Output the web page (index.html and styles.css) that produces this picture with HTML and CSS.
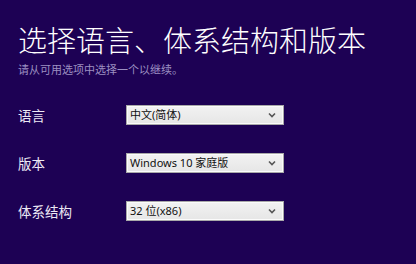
FILE: index.html
```html
<!DOCTYPE html>
<html lang="zh-CN">
<head>
<meta charset="utf-8">
<title>选择语言、体系结构和版本</title>
<link rel="stylesheet" href="styles.css">
</head>
<body>
<div class="page">
  <h1 class="title">选择语言、体系结构和版本</h1>
  <p class="subtitle">请从可用选项中选择一个以继续。</p>
  <div class="form">
    <div class="row">
      <label class="label">语言</label>
      <div class="select">
        <span class="value">中文(简体)</span>
        <svg class="arrow" width="8" height="6" viewBox="0 0 8 6"><path d="M1 1.5 L4 4.5 L7 1.5" fill="none" stroke="#555" stroke-width="1.6"/></svg>
      </div>
    </div>
    <div class="row">
      <label class="label">版本</label>
      <div class="select">
        <span class="value">Windows 10 家庭版</span>
        <svg class="arrow" width="8" height="6" viewBox="0 0 8 6"><path d="M1 1.5 L4 4.5 L7 1.5" fill="none" stroke="#555" stroke-width="1.6"/></svg>
      </div>
    </div>
    <div class="row">
      <label class="label">体系结构</label>
      <div class="select">
        <span class="value">32 位(x86)</span>
        <svg class="arrow" width="8" height="6" viewBox="0 0 8 6"><path d="M1 1.5 L4 4.5 L7 1.5" fill="none" stroke="#555" stroke-width="1.6"/></svg>
      </div>
    </div>
  </div>
</div>
</body>
</html>
```
FILE: styles.css
```css
html, body {
  margin: 0;
  padding: 0;
  background: #1d0154;
  width: 416px;
  height: 264px;
  overflow: hidden;
}
.page {
  padding: 23px 0 0 18px;
  font-family: "Noto Sans", "Noto Sans CJK SC", sans-serif;
}
.title {
  margin: 0;
  font-family: "Noto Sans CJK SC", sans-serif;
  font-weight: 300;
  font-size: 29px;
  line-height: 32px;
  color: #ffffff;
  white-space: nowrap;
}
.subtitle {
  margin: 7px 0 0 0;
  font-family: "Noto Sans CJK SC", sans-serif;
  font-size: 11px;
  line-height: 14px;
  color: #9c90c2;
}
.form {
  margin-top: 29px;
  display: flex;
  flex-direction: column;
  gap: 28px;
}
.row {
  display: flex;
  align-items: center;
  height: 20px;
}
.label {
  width: 108px;
  font-family: "Noto Sans CJK SC", sans-serif;
  font-size: 13.5px;
  line-height: 20px;
  color: #ece8f4;
}
.select {
  position: relative;
  box-sizing: border-box;
  width: 158px;
  height: 20px;
  border: 1px solid #a9a9a9;
  background: linear-gradient(#f2f2f2, #e6e6e6);
  box-shadow: inset 0 0 0 1px #fbfbfb;
  display: flex;
  align-items: center;
  padding-left: 3px;
}
.value {
  font-family: "Noto Sans", "Noto Sans CJK SC", sans-serif;
  font-size: 11px;
  line-height: 18px;
  color: #111;
}
.arrow {
  position: absolute;
  right: 7px;
  top: 6px;
}
```
